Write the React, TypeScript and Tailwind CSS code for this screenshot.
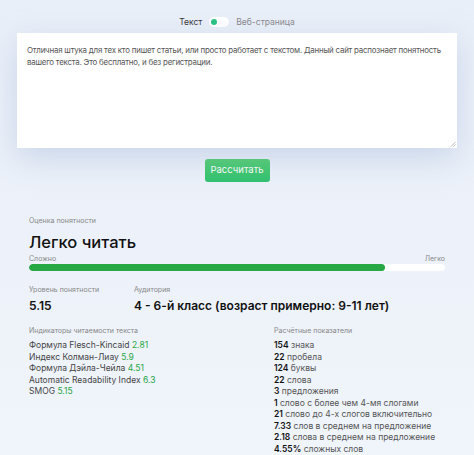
import React from 'react';

const formulas = [
  { name: 'Формула Flesch-Kincaid', value: '2.81' },
  { name: 'Индекс Колман-Лиау', value: '5.9' },
  { name: 'Формула Дэйла-Чейла', value: '4.51' },
  { name: 'Automatic Readability Index', value: '6.3' },
  { name: 'SMOG', value: '5.15' },
];

const stats = [
  { n: '154', t: 'знака' },
  { n: '22', t: 'пробела' },
  { n: '124', t: 'буквы' },
  { n: '22', t: 'слова' },
  { n: '3', t: 'предложения' },
  { n: '1', t: 'слово с более чем 4-мя слогами' },
  { n: '21', t: 'слово до 4-х слогов включительно' },
  { n: '7.33', t: 'слов в среднем на предложение' },
  { n: '2.18', t: 'слова в среднем на предложение' },
  { n: '4.55%', t: 'сложных слов' },
];

export default function App() {
  const score = 85.5;

  return (
    <div
      className="w-[474px] h-[455px] overflow-hidden bg-gradient-to-b from-[#e9eff8] to-[#f0f4fb] text-[#333]"
      style={{ fontFamily: 'Inter, "Noto Sans", sans-serif' }}
    >
      {/* Mode switch */}
      <div className="flex items-center justify-center gap-[7px] pt-[13px] h-[33px] pb-[2px] text-[8.5px]">
        <span className="text-[#333]">Текст</span>
        <div className="w-[20px] h-[10px] rounded-full bg-white flex items-center px-[2px]">
          <div className="w-[6px] h-[6px] rounded-full bg-[#26c281]" />
        </div>
        <span className="text-[#888]">Веб-страница</span>
      </div>

      {/* Text input */}
      <div className="px-[17px]">
        <div className="relative h-[115px] bg-white shadow-[0_10px_30px_rgba(160,180,215,0.45)] px-[10px] pt-[11px] text-[7.9px] tracking-[-0.2px] leading-[12px] text-[#555]">
          Отличная штука для тех кто пишет статьи, или просто работает с текстом. Данный сайт распознает понятность вашего текста. Это бесплатно, и без регистрации.
          <svg className="absolute right-[1px] bottom-[1px]" width="6" height="6" viewBox="0 0 6 6">
            <path d="M5.5 1 L1 5.5 M5.5 3.5 L3.5 5.5" stroke="#aaa" strokeWidth="0.8" />
          </svg>
        </div>
      </div>

      <div className="flex justify-center pt-[11px]">
        <button className="w-[65px] h-[23px] rounded-[3px] bg-gradient-to-b from-[#45cc62] to-[#2fc16f] text-white text-[9.5px]">
          Рассчитать
        </button>
      </div>

      {/* Result */}
      <div className="px-[29px] pt-[34px]">
        <div className="text-[7px] text-[#888] leading-[10px]">Оценка понятности</div>
        <div className="text-[16.5px] font-medium text-[#111] leading-[22px] mt-[5px]">Легко читать</div>
        <div className="flex justify-between text-[7px] text-[#888] leading-[9px] mt-[1px]">
          <span>Сложно</span>
          <span>Легко</span>
        </div>
        <div className="h-[7px] rounded-full bg-white mt-[1px] overflow-hidden">
          <div className="h-full rounded-full bg-[#28a745]" style={{ width: `${score}%` }} />
        </div>

        <div className="flex mt-[14px]">
          <div className="w-[105px]">
            <div className="text-[7px] text-[#888] leading-[10px]">Уровень понятности</div>
            <div className="text-[12px] font-semibold text-[#111] leading-[16px] mt-[3px]">5.15</div>
          </div>
          <div>
            <div className="text-[7px] text-[#888] leading-[10px]">Аудитория</div>
            <div className="text-[12px] font-semibold text-[#111] leading-[16px] mt-[3px]">4 - 6-й класс (возраст примерно: 9-11 лет)</div>
          </div>
        </div>

        <div className="flex mt-[12px]">
          <div className="w-[245px]">
            <div className="text-[7px] text-[#888] leading-[10px]">Индикаторы читаемости текста</div>
            <div className="mt-[4px] text-[8.5px] leading-[11.5px] text-[#444]">
              {formulas.map((f) => (
                <div key={f.name}>
                  {f.name} <span className="text-[#28a745]">{f.value}</span>
                </div>
              ))}
            </div>
          </div>
          <div>
            <div className="text-[7px] text-[#888] leading-[10px]">Расчётные показатели</div>
            <div className="mt-[4px] text-[8.5px] leading-[11.5px] text-[#555]">
              {stats.map((s, i) => (
                <div key={i}>
                  <span className="font-semibold text-[#111]">{s.n}</span> {s.t}
                </div>
              ))}
            </div>
          </div>
        </div>
      </div>
    </div>
  );
}
